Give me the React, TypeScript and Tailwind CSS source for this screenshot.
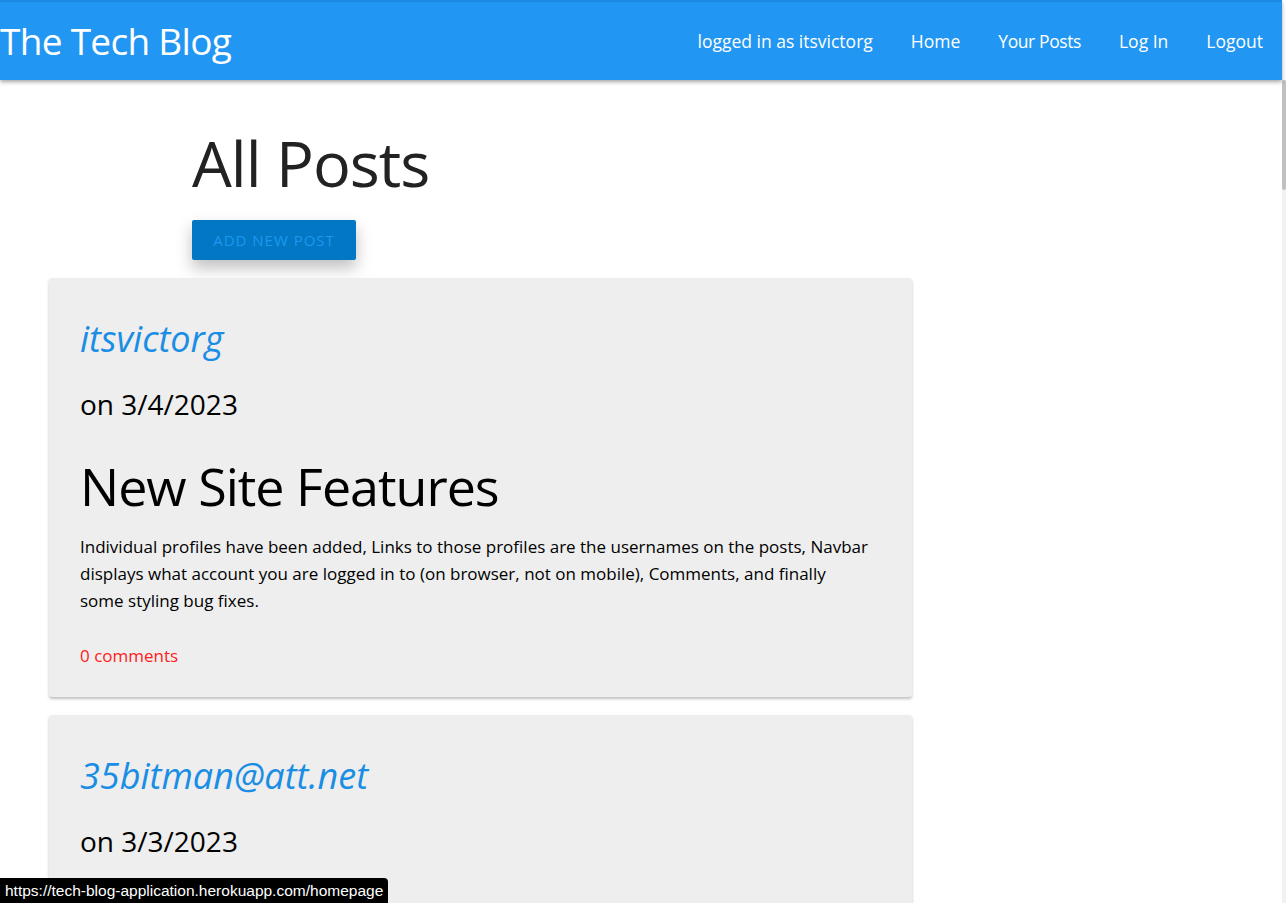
const posts = [
  {
    user: "itsvictorg",
    date: "3/4/2023",
    title: "New Site Features",
    body: [
      "Individual profiles have been added, Links to those profiles are the usernames on the posts, Navbar displays what account you are logged in to (on browser, not on mobile), Comments, and finally",
      "some styling bug fixes.",
    ],
    comments: 0,
  },
  {
    user: "35bitman@att.net",
    date: "3/3/2023",
    title: "Welcome",
    body: [],
    comments: 0,
  },
];

function Navbar() {
  return (
    <nav className="h-[80px] shrink-0 bg-[#2196f3] border-t-2 border-[#1e88e5] flex items-center justify-between pr-[19px] shadow-[0_2px_4px_rgba(0,0,0,0.35)] relative z-10">
      <a className="text-[37px] tracking-[-0.7px] text-white leading-none -mt-[2px]">The Tech Blog</a>
      <ul className="flex items-center gap-[38px] text-[17.5px] text-white">
        <li>logged in as itsvictorg</li>
        <li>Home</li>
        <li className="tracking-[-0.4px]">Your Posts</li>
        <li>Log In</li>
        <li>Logout</li>
      </ul>
    </nav>
  );
}

function PostCard({ post }: { post: (typeof posts)[number] }) {
  return (
    <div className="bg-[#eeeeee] rounded-[3px] shadow-[0_2px_3px_rgba(0,0,0,0.25)] px-[31px] pt-[43px] pb-[33px]">
      <a className="block italic text-[36px] leading-none text-[#1a8de4]">{post.user}</a>
      <h5 className="mt-[33px] text-[28px] leading-none text-black">on {post.date}</h5>
      <h3 className="mt-[42px] text-[52px] tracking-[-1px] leading-none text-black">{post.title}</h3>
      <p className="mt-[21px] text-[17px] leading-[27px] text-black">
        {post.body.map((line, i) => (
          <span key={i} className="block">
            {line}
          </span>
        ))}
      </p>
      <a className="block mt-[33px] text-[17px] leading-none text-[#ff1a1a]">
        {post.comments} comments
      </a>
    </div>
  );
}

export default function App() {
  return (
    <div className="h-[903px] overflow-hidden flex relative bg-white font-['Open_Sans',sans-serif]">
      <div className="flex-1 flex flex-col min-w-0">
        <Navbar />
        <main className="flex flex-col pl-[49px] w-[912px]">
          <div className="pl-[143px] pt-[51px]">
            <h1 className="text-[63px] tracking-[-1px] leading-none text-[#222]">All Posts</h1>
            <button className="mt-[26px] w-[164px] h-[40px] rounded-[2px] bg-[#0277c4] text-[#1c98f0] text-[15px] tracking-[1px] shadow-[0_8px_16px_rgba(0,0,0,0.25)]">
              ADD NEW POST
            </button>
          </div>
          <div className="mt-[18px] flex flex-col gap-[18px]">
            {posts.map((p) => (
              <PostCard key={p.user} post={p} />
            ))}
          </div>
        </main>
      </div>
      <div className="w-[4px] shrink-0 bg-[#f1f1f1] flex flex-col">
        <div className="h-[80px] bg-white" />
        <div className="h-[110px] bg-[#c1c1c1] rounded-[2px]" />
      </div>
      <div className="absolute left-0 bottom-0 h-[25px] px-[5px] bg-black text-white text-[15.5px] leading-[25px] rounded-tr-[4px] font-['Liberation_Sans',sans-serif]">
        https://tech-blog-application.herokuapp.com/homepage
      </div>
    </div>
  );
}
